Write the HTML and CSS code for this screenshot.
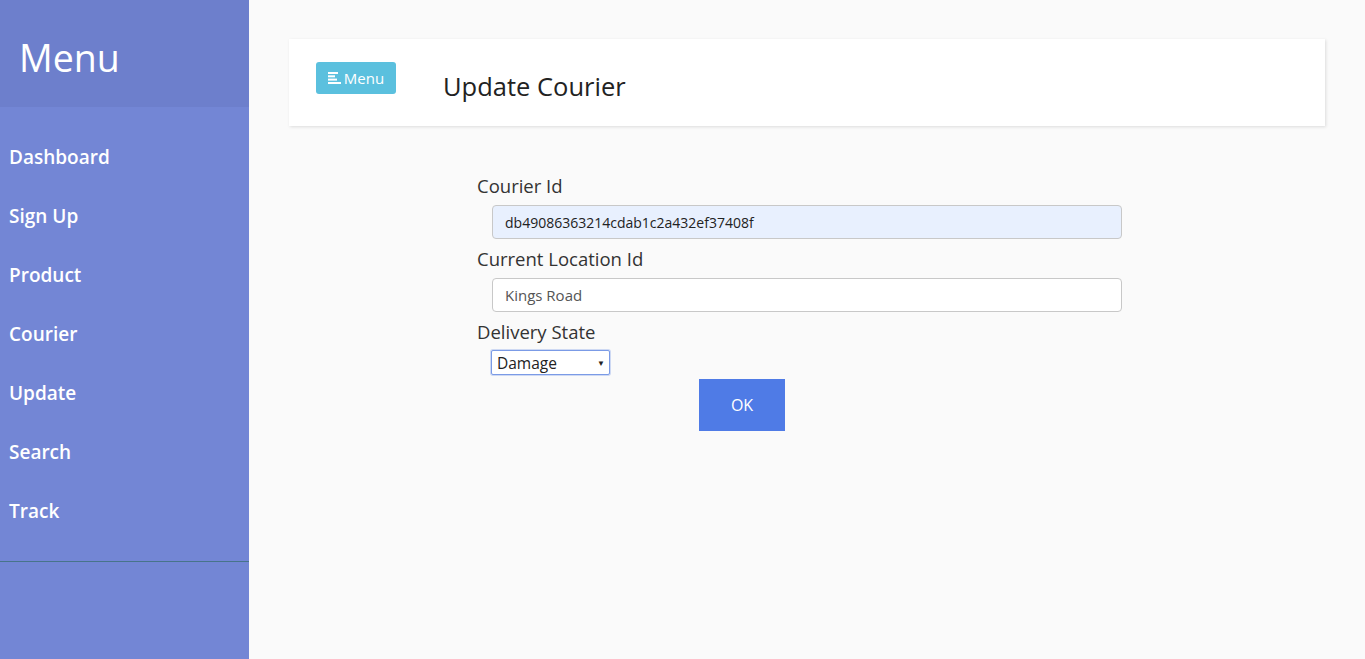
FILE: index.html
```html
<!DOCTYPE html>
<html>
<head>
<meta charset="utf-8">
<link rel="stylesheet" href="styles.css">
</head>
<body>
<div class="wrapper">
  <nav class="sidebar">
    <div class="sidebar-header"><h3>Menu</h3></div>
    <ul class="components">
      <li><a href="#">Dashboard</a></li>
      <li><a href="#">Sign Up</a></li>
      <li><a href="#">Product</a></li>
      <li><a href="#">Courier</a></li>
      <li><a href="#">Update</a></li>
      <li><a href="#">Search</a></li>
      <li><a href="#">Track</a></li>
    </ul>
  </nav>
  <main class="content">
    <div class="topbar">
      <button class="menu-btn">
        <svg width="13" height="12" viewBox="0 0 13 12"><rect x="0" y="0" width="10" height="2" fill="#fff"/><rect x="0" y="3.3" width="7" height="2" fill="#fff"/><rect x="0" y="6.6" width="9" height="2" fill="#fff"/><rect x="0" y="10" width="13" height="2" fill="#fff"/></svg>
        <span>Menu</span>
      </button>
      <h2 class="page-title">Update Courier</h2>
    </div>
    <form class="form">
      <label class="label">Courier Id</label>
      <input class="input autofill" type="text" value="db49086363214cdab1c2a432ef37408f">
      <label class="label">Current Location Id</label>
      <input class="input plain" type="text" value="Kings Road">
      <label class="label tight">Delivery State</label>
      <div class="select"><span>Damage</span><span class="caret">▼</span></div>
      <div class="actions"><button type="button" class="ok-btn">OK</button></div>
    </form>
  </main>
</div>
</body>
</html>
```
FILE: styles.css
```css
* { box-sizing: border-box; }
html, body { margin: 0; padding: 0; height: 100%; }
body {
  font-family: "Open Sans", "Noto Sans", sans-serif;
  background: #fafafa;
  color: #333;
}
.wrapper { display: flex; height: 659px; }
.sidebar {
  width: 249px;
  flex: none;
  background: #7386d5;
  color: #fff;
}
.sidebar-header {
  height: 107px;
  background: #6d7fcc;
  padding: 36px 0 0 19px;
}
.sidebar-header h3 {
  margin: 0;
  font-size: 37.5px;
  font-weight: 500;
  line-height: 44px;
}
.components {
  list-style: none;
  margin: 0;
  padding: 21px 0 20px;
  border-bottom: 1px solid #47748b;
}
.components li a {
  display: block;
  height: 59px;
  line-height: 59px;
  padding-left: 9px;
  color: #fff;
  text-decoration: none;
  font-size: 19px;
  font-weight: 600;
}
.content {
  flex: 1;
  padding: 39px 40px 0 40px;
}
.topbar {
  height: 87px;
  background: #fff;
  box-shadow: 1px 1px 3px rgba(0,0,0,0.12);
  display: flex;
  align-items: center;
  padding-left: 27px;
}
.menu-btn {
  width: 80px;
  height: 32px;
  margin-top: -10px;
  background: #5bc0de;
  border: none;
  border-radius: 3px;
  color: #fff;
  font-family: inherit;
  font-size: 15px;
  display: flex;
  align-items: center;
  justify-content: center;
  gap: 3px;
  padding: 0;
}
.page-title {
  margin: 6px 0 0 47px;
  font-size: 25.5px;
  font-weight: 500;
  color: #222;
}
.form {
  display: flex;
  flex-direction: column;
  align-items: flex-start;
  margin: 47px 0 0 188px;
  width: 645px;
}
.label {
  font-size: 18.5px;
  font-weight: 500;
  color: #333;
  line-height: 25px;
  margin-bottom: 7px;
}
.label.tight { margin-bottom: 6px; }
.input {
  margin-left: 15px;
  width: 630px;
  height: 34px;
  border: 1px solid #c8c8c8;
  border-radius: 4px;
  background: #fff;
  font-family: inherit;
  font-size: 14px;
  color: #555;
  padding: 0 12px;
  margin-bottom: 7px;
}
.input.autofill { background: #e8f0fe; color: #222; }
.input.plain { font-size: 15px; }
.select {
  margin-left: 14px;
  width: 119px;
  height: 25px;
  border: 1px solid #7b9be6;
  box-shadow: 0 0 0 1px rgba(123,155,230,0.35);
  border-radius: 2px;
  background: #fff;
  font-size: 15.5px;
  color: #222;
  display: flex;
  align-items: center;
  justify-content: space-between;
  padding: 0 4px 0 5px;
}
.caret { font-size: 8px; color: #222; }
.actions {
  width: 530px;
  display: flex;
  justify-content: center;
  margin-top: 4px;
}
.ok-btn {
  width: 86px;
  height: 52px;
  background: #4f7be6;
  color: #fff;
  border: none;
  font-family: inherit;
  font-size: 16px;
}
```
